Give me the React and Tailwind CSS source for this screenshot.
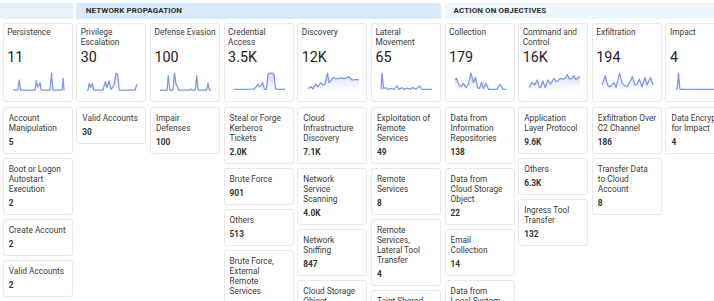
import React from "react";

const columns = [
  {
    name: "Persistence",
    total: "11",
    line: [[0,0],[4.8,0],[6.2,0.6],[7.6,0],[22,0],[23.3,0.56],[24.5,0.2],[25.5,0.25],[27,0.45],[28.3,0],[37,0],[38.5,1],[40,0],[49,0],[50.2,0.7],[51,0]],
    items: [
      ["Account\nManipulation", "5"],
      ["Boot or Logon\nAutostart\nExecution", "2"],
      ["Create Account", "2"],
      ["Valid Accounts", "2"],
    ],
  },
  {
    name: "Privilege\nEscalation",
    total: "30",
    line: [[0,0],[1,0],[2.3,0.4],[3.8,0.15],[5.3,0.4],[6.7,0],[16,0],[18.3,0.5],[20,0.15],[22,0.55],[24,0.05],[27,0.3],[29,1],[30.5,0.95],[32.3,0],[48,0],[50,0.35]],
    items: [["Valid Accounts", "30"]],
  },
  {
    name: "Defense Evasion",
    total: "100",
    line: [[0,0],[7,0],[8.3,0.85],[9.8,0],[13,0],[14.5,1],[16,0.35],[17,0.3],[18.5,0],[29,0],[30.5,0.08],[32,0],[35.3,0],[36.7,0.85],[38.2,0],[46.5,0],[48,0.4],[49.5,0],[51,0]],
    items: [["Impair\nDefenses", "100"]],
  },
  {
    name: "Credential\nAccess",
    total: "3.5K",
    line: [[0,0.05],[20,0.07],[22,0.2],[24,0.35],[25.5,0.2],[27,0.25],[28.5,0.45],[30.5,0.05],[32.5,0.05],[34,0.95],[36,1],[38.5,1],[40,0.9],[41.5,0.1],[43,0.05],[51,0.05]],
    items: [
      ["Steal or Forge\nKerberos\nTickets", "2.0K"],
      ["Brute Force", "901"],
      ["Others", "513"],
      ["Brute Force,\nExternal\nRemote\nServices", "16"],
    ],
  },
  {
    name: "Discovery",
    total: "12K",
    line: [[0,0.1],[3,0.2],[5,0.08],[7.7,0.35],[10,0.2],[12.7,0.45],[15,0.3],[17,0.35],[19.5,1],[21,0.45],[23,0.55],[25,0.75],[27,0.7],[30,0.68],[33,0.72],[36,0.68],[39,0.75],[41,0.78],[44,0.6],[47,0.62],[51,0.62]],
    items: [
      ["Cloud\nInfrastructure\nDiscovery", "7.1K"],
      ["Network\nService\nScanning", "4.0K"],
      ["Network\nSniffing", "847"],
      ["Cloud Storage\nObject\nDiscovery", "12"],
    ],
  },
  {
    name: "Lateral\nMovement",
    total: "65",
    line: [[0,0.05],[1,1],[2.5,0.1],[5,0.15],[7,0.05],[10,0.1],[13,0.05],[16,0.25],[18,0.05],[21,0.15],[23,0.05],[26,0.12],[29,0.05],[32,0.15],[35,0.05],[38.5,0.25],[41,0.05],[51,0.05]],
    items: [
      ["Exploitation of\nRemote\nServices", "49"],
      ["Remote\nServices", "8"],
      ["Remote\nServices,\nLateral Tool\nTransfer", "4"],
      ["Taint Shared\nContent", "3"],
    ],
  },
  {
    name: "Collection",
    total: "179",
    line: [[0,0.6],[1.5,0.7],[4,0.3],[6,0.2],[8.5,0.4],[11,0.15],[13,0.3],[16,1],[18.5,0.45],[20.5,0.75],[22.5,0.15],[24.5,0.1],[26.5,0.45],[28.5,0.1],[31,0.4],[33.5,0.05],[42,0.05],[45,0.35],[48,0.05],[51,0.05]],
    items: [
      ["Data from\nInformation\nRepositories", "138"],
      ["Data from\nCloud Storage\nObject", "22"],
      ["Email\nCollection", "14"],
      ["Data from\nLocal System", "9"],
    ],
  },
  {
    name: "Command and\nControl",
    total: "16K",
    line: [[0,0.15],[3,0.45],[5.5,0.3],[8.3,0.6],[10.5,0.15],[12,0.2],[14,0.55],[16,0.15],[19,0.6],[21.5,0.35],[25,0.7],[27,0.5],[29,0.55],[31,0.7],[34,0.65],[36,0.7],[38.3,0.92],[40.5,0.65],[43,0.7],[45,0.85],[47,0.6],[49,0.75],[51,0.8]],
    items: [
      ["Application\nLayer Protocol", "9.6K"],
      ["Others", "6.3K"],
      ["Ingress Tool\nTransfer", "132"],
    ],
  },
  {
    name: "Exfiltration",
    total: "194",
    line: [[0,0.3],[3.3,0.85],[5.5,0.3],[7,0.2],[9,0.25],[12,0.45],[14,0.15],[17.5,1],[20,0.45],[22,0.3],[25,0.2],[28,0.5],[30.5,0.8],[33,0.3],[35,0.35],[37.5,0.65],[40,0.2],[43,0.75],[45,0.3],[48.5,0.75],[51,0.3]],
    items: [
      ["Exfiltration Over\nC2 Channel", "186"],
      ["Transfer Data\nto Cloud\nAccount", "8"],
    ],
  },
  {
    name: "Impact",
    total: "4",
    line: [[0,0.05],[1.2,0.1],[2.5,1],[3.8,0.1],[5,0.05],[51,0.05]],
    items: [["Data Encrypted\nfor Impact", "4"]],
  },
];

function Sparkline({ points, id }) {
  const H = 19;
  const pts = points.map(([x, v]) => `${x},${(H - 0.8 - v * (H - 2)).toFixed(2)}`);
  const area = `M0,${H} L${pts.join(" L")} L51,${H} Z`;
  return (
    <svg width="51" height={H} viewBox={`0 0 51 ${H}`} className="block overflow-visible">
      <defs>
        <linearGradient id={id} x1="0" y1="0" x2="0" y2="1">
          <stop offset="0%" stopColor="#8aa4f8" stopOpacity="0.35" />
          <stop offset="100%" stopColor="#8aa4f8" stopOpacity="0" />
        </linearGradient>
      </defs>
      <path d={area} fill={`url(#${id})`} />
      <polyline points={pts.join(" ")} fill="none" stroke="#7995f6" strokeWidth="1.25" strokeLinejoin="round" />
    </svg>
  );
}

function TacticCard({ col, idx }) {
  return (
    <div className="h-[79px] rounded-[3px] border border-[#e9e9e9] bg-white pl-[3.5px] pt-[2.5px]">
      <div className="h-[20px] whitespace-pre text-[8.3px] leading-[10px] text-[#3a3a3a]">{col.name}</div>
      <div className="mt-[2.5px] text-[14.3px] leading-[16px] text-[#222]">{col.total}</div>
      <div className="ml-[6px] mt-[7px]">
        <Sparkline points={col.line} id={`g${idx}`} />
      </div>
    </div>
  );
}

function TechniqueCard({ title, value }) {
  return (
    <div className="rounded-[3px] border border-[#e9e9e9] bg-white pb-[6px] pl-[5px] pt-[5px]">
      <div className="whitespace-pre text-[8.3px] leading-[10px] text-[#3a3a3a]">{title}</div>
      <div className="mt-[4px] text-[8.3px] font-bold leading-[10px] text-[#333]">{value}</div>
    </div>
  );
}

export default function App() {
  return (
    <div className="h-[301px] w-[714px] overflow-hidden bg-white font-['Roboto',sans-serif]">
      <div className="grid grid-cols-[repeat(10,70px)] gap-x-[3.65px] gap-y-[4px] pl-[2.7px] pt-[3px]">
        <div className="-ml-[2.7px] h-[16px] bg-[#e6f1fa]" />
        <div className="col-span-5 flex h-[16px] items-center bg-[#d8ebfa] pl-[9.5px] text-[8px] font-bold tracking-[0.1px] text-[#2d2d2d]">
          NETWORK PROPAGATION
        </div>
        <div className="col-span-4 flex h-[16px] items-center bg-[#eef6fc] pl-[9px] text-[8px] font-bold tracking-[0.1px] text-[#2d2d2d]">
          ACTION ON OBJECTIVES
        </div>
        {columns.map((col, i) => (
          <div key={col.total + i} className="flex flex-col">
            <TacticCard col={col} idx={i} />
            <div className="mt-[5px] flex flex-col gap-[4px]">
              {col.items.map(([t, v]) => (
                <TechniqueCard key={t} title={t} value={v} />
              ))}
            </div>
          </div>
        ))}
      </div>
    </div>
  );
}
